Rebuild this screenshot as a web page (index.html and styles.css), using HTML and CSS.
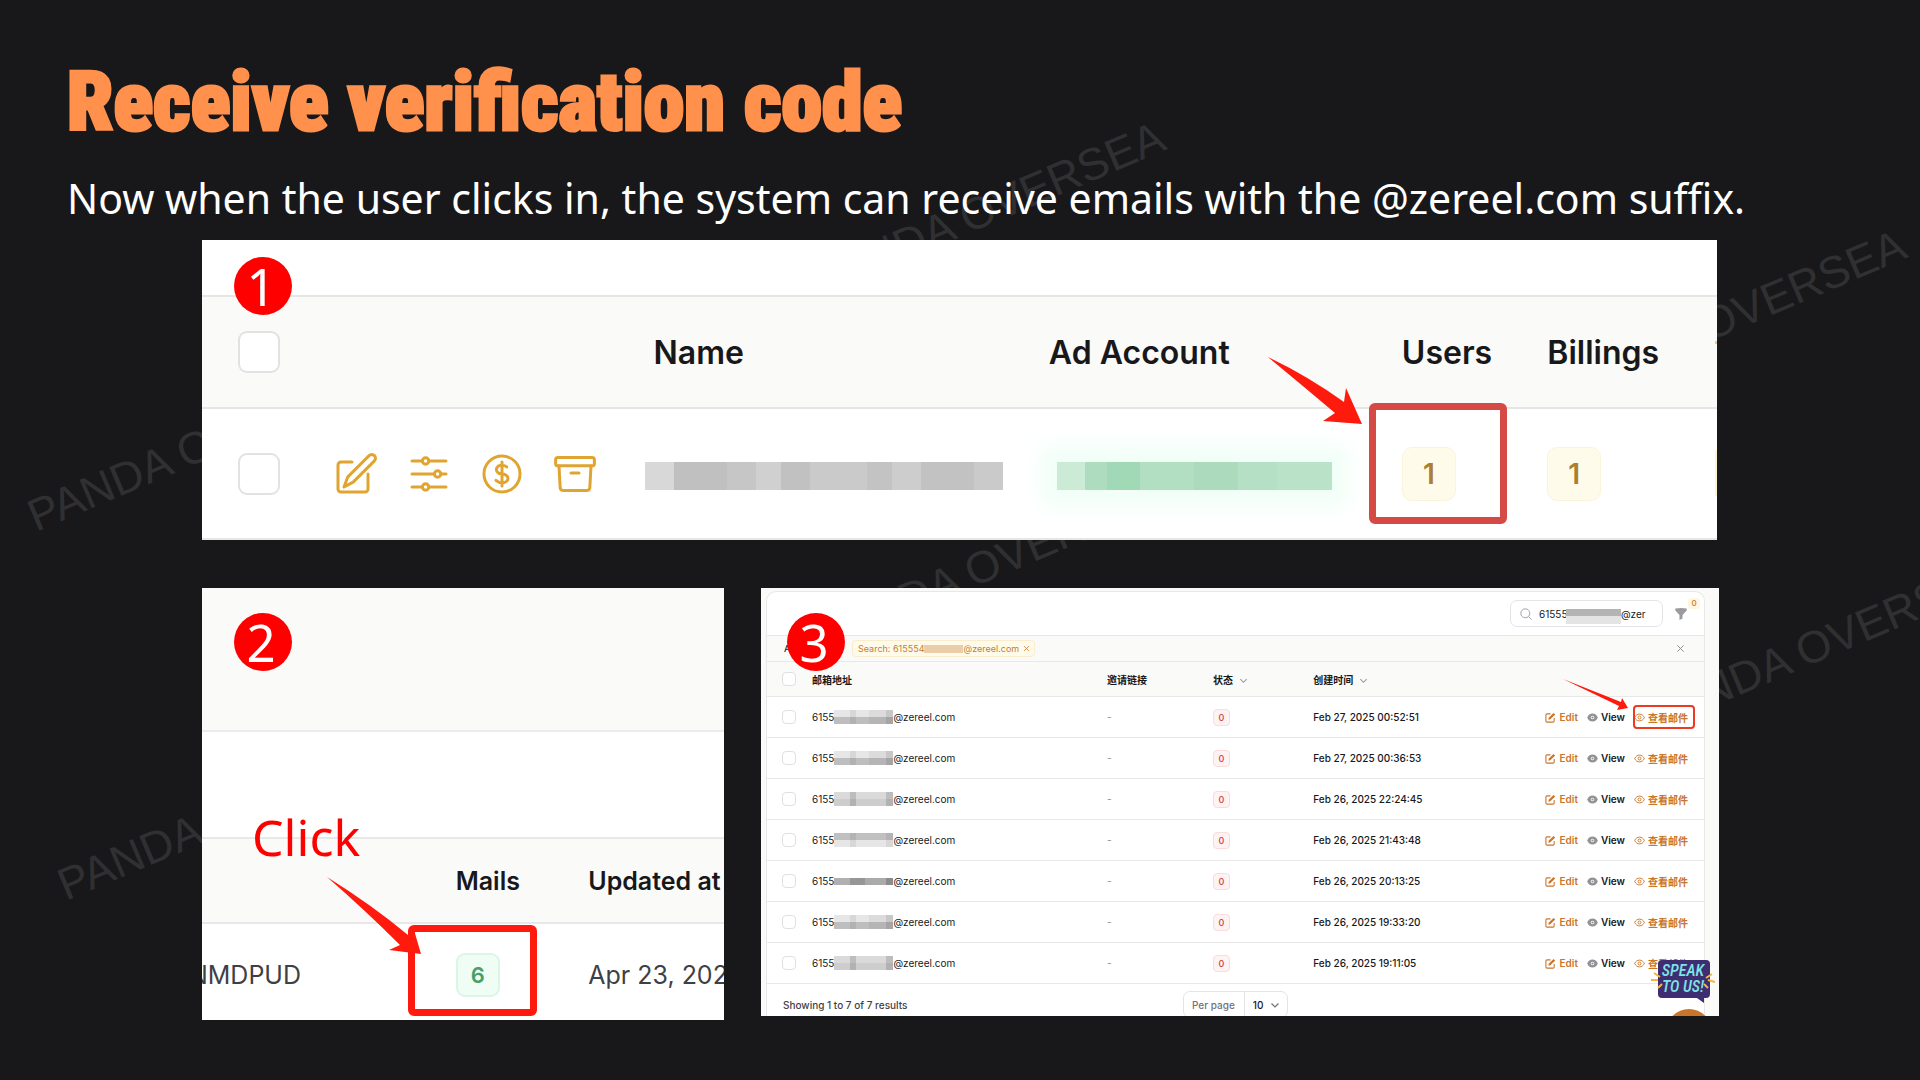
FILE: index.html
```html
<!DOCTYPE html>
<html lang="en">
<head>
<meta charset="utf-8">
<title>Receive verification code</title>
<link rel="stylesheet" href="styles.css">
</head>
<body>
<svg class="defs" aria-hidden="true">
  <symbol id="pencil" viewBox="0 0 24 24"><path d="M16.862 4.487l1.687-1.688a1.875 1.875 0 1 1 2.652 2.652L10.582 16.070 6 18.500l1.930-5.082 8.932-8.931ZM18 12v7.500A1.500 1.500 0 0 1 16.500 21H4.500A1.500 1.500 0 0 1 3 19.500V7.500A1.500 1.500 0 0 1 4.500 6H10"/></symbol>
  <symbol id="sliders" viewBox="0 0 24 24"><path d="M3.500 5.500h5m3.600 0h8.400M3.500 12h11m3.600 0h2.400M3.500 18.500h5m3.600 0h8.400"/><circle cx="10.300" cy="5.500" r="1.600"/><circle cx="16.300" cy="12" r="1.600"/><circle cx="10.300" cy="18.500" r="1.600"/></symbol>
  <symbol id="dollar" viewBox="0 0 24 24"><circle cx="12" cy="12" r="9"/><path d="M12 6v12m-3-2.800.9.6c1.100.9 3 .9 4.200 0s1.200-2.300 0-3.200c-.6-.4-1.300-.6-2.100-.6-.7 0-1.500-.2-2-.7-1.100-.8-1.100-2.200 0-3.100s2.900-.8 4 0l.4.3"/></symbol>
  <symbol id="archive" viewBox="0 0 24 24"><rect x="2.300" y="3.700" width="19.400" height="4.200" rx="1.200"/><path d="m4 8 .6 11a1.600 1.600 0 0 0 1.600 1.300h11.600a1.600 1.600 0 0 0 1.600-1.300L20 8m-10 3.500h4"/></symbol>
  <symbol id="edit" viewBox="0 0 12 12"><path d="M6 2H2.200A1.200 1.200 0 0 0 1 3.200v6.600A1.200 1.200 0 0 0 2.200 11h6.600A1.200 1.200 0 0 0 10 9.800V6.500" fill="none" stroke="currentColor" stroke-width="1.200"/><path d="m4 6.300 5.300-5.300 1.800 1.800L5.800 8 3.700 8.500z" fill="currentColor"/></symbol>
  <symbol id="eye-solid" viewBox="0 0 12 12"><path fill="currentColor" fill-rule="evenodd" d="M.2 6C1.300 3.200 3.300 1.600 6 1.600S10.700 3.200 11.800 6C10.700 8.800 8.700 10.400 6 10.400S1.300 8.800.2 6zM6 4a2 2 0 1 0 0 4 2 2 0 0 0 0-4z"/><circle cx="6" cy="6" r="1.200" fill="currentColor"/></symbol>
  <symbol id="eye" viewBox="0 0 12 12"><path fill="none" stroke="currentColor" d="M.7 6C1.800 3.700 3.700 2.300 6 2.300S10.200 3.700 11.300 6C10.200 8.300 8.300 9.700 6 9.700S1.800 8.300.7 6z"/><circle cx="6" cy="6" r="1.600" fill="none" stroke="currentColor"/></symbol>
  <symbol id="chevron" viewBox="0 0 10 10"><path d="m1.500 3.500 3.500 3.500 3.500-3.500" fill="none" stroke="currentColor" stroke-width="1.200"/></symbol>
  <symbol id="cross" viewBox="0 0 10 10"><path d="m1.500 1.500 7 7m0-7-7 7" fill="none" stroke="currentColor" stroke-width="1.100"/></symbol>
</svg>

<div class="watermarks" aria-hidden="true">
  <span class="mark m1">PANDA OVERSEA</span>
  <span class="mark m2">PANDA OVERSEA</span>
  <span class="mark m3">PANDA OVERSEA</span>
  <span class="mark m4">PANDA OVERSEA</span>
  <span class="mark m5">PANDA OVERSEA</span>
  <span class="mark m6">PANDA OVERSEA</span>
</div>

<main class="slide">
  <header class="intro">
    <h1>Receive verification code</h1>
    <p>Now when the user clicks in, the system can receive emails with the @zereel.com suffix.</p>
  </header>

  <div class="steps">
    <section class="shot accounts">
      <span class="step">1</span>
      <div class="strip"></div>
      <table>
        <colgroup><col class="a1"><col class="a2"><col class="a3"><col class="a4"><col class="a5"><col class="a6"></colgroup>
        <thead><tr>
          <th class="check"><input type="checkbox" aria-label="Select all accounts"></th><th></th><th>Name</th><th>Ad Account</th><th>Users</th><th>Billings</th>
        </tr></thead>
        <tbody><tr>
          <td class="check"><input type="checkbox" aria-label="Select account"></td>
          <td><div class="tools">
            <button aria-label="Edit"><svg><use href="#pencil"/></svg></button>
            <button aria-label="Settings"><svg><use href="#sliders"/></svg></button>
            <button aria-label="Billing"><svg><use href="#dollar"/></svg></button>
            <button aria-label="Archive"><svg><use href="#archive"/></svg></button>
          </div></td>
          <td><div class="mosaic grey"></div></td>
          <td><div class="mosaic green"></div></td>
          <td><span class="count">1</span></td>
          <td><span class="count">1</span></td>
        </tr></tbody>
      </table>
      <div class="frame frame-users"></div>
      <svg class="arrow arrow-users" viewBox="0 0 94 67"><path d="M0 0Q40 19 76 45L78 31 94 67 55 64 67 56Q34 28 0 0z"/></svg>
      <i class="edge edge-head"></i><i class="edge edge-row"></i>
    </section>

    <section class="shot mails">
      <span class="step">2</span>
      <div class="strip tinted"></div>
      <div class="strip plain"></div>
      <table>
        <colgroup><col class="b1"><col class="b2"><col class="b3"></colgroup>
        <thead><tr><th></th><th>Mails</th><th>Updated at</th></tr></thead>
        <tbody><tr><td><div class="code">NMDPUD</div></td><td><span class="count">6</span></td><td>Apr 23, 2025</td></tr></tbody>
      </table>
      <span class="click">Click</span>
      <div class="frame frame-mails"></div>
      <svg class="arrow arrow-mails" viewBox="0 0 94 77"><path d="M0 0Q45 28 81 58L87 53 94 77 62 73 73 68Q38 33 0 0z"/></svg>
    </section>

    <section class="shot inbox">
      <div class="card">
        <div class="toolbar">
          <label class="search"><svg viewBox="0 0 12 12"><circle cx="5.300" cy="5.300" r="4.500"/><path d="m8.600 8.600 3 3"/></svg>
            <input type="text" aria-label="Search" value="61555&nbsp;&nbsp;&nbsp;&nbsp;&nbsp;&nbsp;&nbsp;&nbsp;&nbsp;&nbsp;&nbsp;&nbsp;&nbsp;&nbsp;&nbsp;&nbsp;&nbsp;&nbsp;&nbsp;@zer"><i class="blur"></i></label>
          <button class="filter" aria-label="Filter"><svg viewBox="0 0 12 12"><path d="M.3.500Q6-.5 11.700.500V2.600L7.500 7v3.600L4.500 12V7L.3 2.600z"/></svg><span>0</span></button>
        </div>
        <div class="filters">
          <span class="label">Active filters</span>
          <span class="chip">Search: 615554<i></i>@zereel.com<button aria-label="Remove filter"><svg><use href="#cross"/></svg></button></span>
          <button class="clear" aria-label="Clear filters"><svg><use href="#cross"/></svg></button>
        </div>
        <table>
          <colgroup><col class="c1"><col class="c2"><col class="c3"><col class="c4"><col class="c5"><col class="c6"></colgroup>
          <thead><tr>
            <th class="check"><input type="checkbox" aria-label="Select all"></th><th>邮箱地址</th><th>邀请链接</th><th>状态<svg class="sort"><use href="#chevron"/></svg></th><th>创建时间<svg class="sort"><use href="#chevron"/></svg></th><th></th>
          </tr></thead>
          <tbody id="rows"></tbody>
        </table>
        <div class="footer">
          <span>Showing 1 to 7 of 7 results</span>
          <div class="pager"><label for="per">Per page</label><select id="per"><option>10</option></select><svg><use href="#chevron"/></svg></div>
        </div>
      </div>
      <span class="step">3</span>
      <div class="frame frame-view"></div>
      <svg class="arrow arrow-view" viewBox="0 0 66 32"><path d="M0 0 58 23 59 19 65 29 54 31 56 27z"/></svg>
      <i class="bubble"></i>
      <a class="speak" href="#contact">
        <svg viewBox="0 0 64 46"><path class="body" d="M11 1H55q4 0 4 4V35q0 4-4 4H53V44L46 39H11q-4 0-4-4V5q0-4 4-4z"/><path class="ray" d="M3 14 9 18M0 21H7M7 29 11 25M55 19 61 15M57 21 64 23M53 25 57 29"/></svg>
        <span>SPEAK<br>TO US!</span>
      </a>
    </section>
  </div>
</main>
<script src="rows.js"></script>
</body>
</html>
```
FILE: rows.js
```js
const rows = [
  ["Feb 27, 2025 00:52:51", "light"],
  ["Feb 27, 2025 00:36:53", "light"],
  ["Feb 26, 2025 22:24:45", "even"],
  ["Feb 26, 2025 21:43:48", "heavy"],
  ["Feb 26, 2025 20:13:25", "band"],
  ["Feb 26, 2025 19:33:20", "light"],
  ["Feb 26, 2025 19:11:05", "even"]
];
document.getElementById("rows").innerHTML = rows.map(([date, tone]) => `
<tr>
  <td class="check"><input type="checkbox" aria-label="Select row"></td>
  <td><div class="mail">6155<i class="${tone}"></i>@zereel.com</div></td>
  <td class="none">-</td>
  <td><span class="count">0</span></td>
  <td>${date}</td>
  <td><div class="actions">
    <a class="amber" href="#edit"><svg class="small"><use href="#edit"/></svg>Edit</a>
    <a class="view" href="#view"><svg><use href="#eye-solid"/></svg>View</a>
    <a class="amber" href="#mail"><svg><use href="#eye"/></svg>查看邮件</a>
  </div></td>
</tr>`).join("");
```
FILE: styles.css
```css
* { box-sizing: border-box; }
body { margin: 0; background: #18181a; color: #fff; font-family: "Noto Sans", "Noto Sans CJK SC", sans-serif; }
.defs { display: none; }
button { border: 0; padding: 0; background: none; color: inherit; font: inherit; display: flex; }
a { color: inherit; text-decoration: none; }
table { width: 100%; table-layout: fixed; border-spacing: 0; text-align: left; }
th, td { padding: 0; white-space: nowrap; vertical-align: middle; }
input[type="checkbox"] { appearance: none; display: block; margin: 0; background: #fff; }

/* watermark layer */
.watermarks { position: absolute; inset: 0; overflow: hidden; }
.mark { position: absolute; font: 45px/44px "Liberation Sans", sans-serif; color: #303032; white-space: nowrap; transform: rotate(-23deg); transform-origin: 0 37px; }
.m1 { left: 36px; top: 495px; }
.m2 { left: 819px; top: 260px; }
.m3 { left: 1560px; top: 368px; }
.m4 { left: 824px; top: 614px; }
.m5 { left: 66px; top: 864px; }
.m6 { left: 1655px; top: 694px; }

.slide { position: relative; min-height: 100vh; padding: 55px 0 60px; }
.intro { padding: 0 67px; }
h1 { margin: 0 0 21px; font: 900 82px/94px "Roboto Condensed", sans-serif; color: #ff914d; -webkit-text-stroke: 3px #ff914d; }
.intro p { margin: 0 0 14px; font-size: 41px; line-height: 56px; }
.steps { display: grid; grid-template-columns: 522fr 958fr; gap: 48px 37px; align-items: start; padding: 0 201px 0 202px; }
.shot { position: relative; overflow: hidden; background: #fff; color: #18181b; font-family: Inter, "Noto Sans CJK SC", sans-serif; }
.step { position: absolute; z-index: 2; left: 32px; top: 25px; width: 58px; height: 58px; border-radius: 50%; background: #f00; color: #fff; font: 51px/58px "Noto Sans", sans-serif; text-align: center; padding-right: 4px; }
.count { display: flex; align-items: center; justify-content: center; border: 1px solid; }
.frame { position: absolute; border: 7px solid #ff1a0e; border-radius: 6px; }
.arrow { position: absolute; fill: #ff1a0e; }

/* step 1 */
.accounts { grid-column: 1 / -1; margin-right: 2px; }
.accounts .step { top: 17px; }
.accounts .strip { height: 55px; }
.accounts th { height: 114px; background: #fafaf9; border: solid #e6e6e6; border-width: 2px 0; font-size: 32px; font-weight: 600; }
.accounts td { height: 131px; border-bottom: 2px solid #e6e6e6; }
.a1 { width: 8.6%; } .a2 { width: 21.2%; } .a3 { width: 26.1%; } .a4 { width: 23.3%; } .a5 { width: 9.6%; } .a6 { width: 11.2%; }
.accounts .check { padding-left: 36px; }
.accounts input { width: 42px; height: 42px; border: 2px solid #e2e2e2; border-radius: 9px; }
.tools { display: flex; gap: 25px; color: #e0a530; }
.tools svg { width: 48px; height: 48px; fill: none; stroke: currentColor; stroke-width: 1.5; stroke-linecap: round; stroke-linejoin: round; }
.mosaic { height: 28px; margin-top: 4px; }
.grey { width: 358px; margin-left: -8px; background: linear-gradient(90deg, #d8d8d8 8%, #c0c0c0 8% 23%, #c6c6c6 23% 31%, #d0d0d0 31% 38%, #c1c1c1 38% 46%, #cacaca 46% 62%, #c3c3c3 62% 69%, #cdcdcd 69% 77%, #c2c2c2 77% 92%, #cacaca 92%); }
.green { width: 275px; margin-left: 8px; background: linear-gradient(90deg, #ccebd7 10%, #aedcbe 10% 18%, #a1d8b5 18% 30%, #b2dec2 30% 50%, #abdabd 50% 66%, #b6e0c6 66% 80%, #b9e2c8 80%); box-shadow: 0 0 22px 16px #f0fff7; }
.accounts .count { width: 54px; height: 54px; border-color: #fbf3dc; border-radius: 10px; background: #fffbea; color: #aa8030; font-size: 28px; font-weight: 600; }
.frame-users { left: 1167px; top: 163px; width: 138px; height: 121px; border-color: #d64a46; }
.arrow-users { left: 1066px; top: 117px; width: 94px; }
.edge { position: absolute; right: 0; width: 2px; background: #f6c77e; }
.edge-head { top: 101px; height: 3px; }
.edge-row { top: 210px; height: 46px; background: #fdf3d3; }

/* step 2 */
.tinted { height: 142px; background: #fafaf9; }
.plain { height: 107px; border-top: 2px solid #ececec; }
.mails th { height: 87px; border: solid #e8e8e8; border-width: 2px 0; background: #fafaf9; font-size: 25px; font-weight: 600; }
.mails td { height: 96px; font-size: 25px; color: #3f3f46; padding-top: 6px; }
.b1 { width: 48.6%; } .b2 { width: 25.4%; } .b3 { width: 26%; }
.code { width: 99px; display: flex; justify-content: flex-end; }
.mails .count { width: 44px; height: 44px; border: 2px solid #dcf5e5; border-radius: 9px; background: #f0fdf4; color: #46a06c; font-size: 22px; font-weight: 600; }
.click { position: absolute; left: 50px; top: 214px; color: #f00; font: 50px/70px "Noto Sans", sans-serif; }
.frame-mails { left: 206px; top: 337px; width: 129px; height: 91px; }
.arrow-mails { left: 125px; top: 289px; width: 94px; }

/* step 3 */
.inbox { background: #fafaf9; padding: 3px 14px 0 5px; font-size: 10px; font-weight: 500; }
.inbox .step { left: 26px; }
.card { border: solid #e8e8e8; border-width: 1px 1px 0; border-radius: 10px 10px 0 0; background: #fff; }
.toolbar { display: flex; justify-content: flex-end; align-items: center; gap: 12px; height: 43px; padding-right: 17px; }
.search { position: relative; display: flex; align-items: center; gap: 7px; width: 153px; height: 27px; padding: 0 14px 0 9px; border: 1px solid #e4e4e7; border-radius: 7px; }
.search svg { flex: none; width: 12px; height: 12px; fill: none; stroke: #a1a1aa; }
.search input { width: 110px; border: 0; padding: 0; background: none; font: 400 10px/16px Inter, sans-serif; color: #18181b; outline: 0; }
.blur { position: absolute; left: 55px; top: 8px; width: 55px; height: 15px; background: linear-gradient(#b4b4b4 50%, #e4e4e4 50%); }
.filter { position: relative; color: #c77b30; }
.filter svg { width: 12px; height: 12px; fill: #9a9a9f; }
.filter span { position: absolute; left: 13px; top: -10px; width: 12px; height: 11px; border-radius: 3px; background: #fff6e0; font-size: 8px; line-height: 11px; text-align: center; }
.filters { display: flex; align-items: center; gap: 9px; height: 26px; padding: 0 19px 0 17px; border-top: 1px solid #e8e8e8; background: #fafaf9; font-size: 9px; }
.label { width: 59px; white-space: nowrap; }
.chip { display: flex; align-items: center; height: 17px; padding: 0 4px 0 5px; border: 1px solid #fbeccb; border-radius: 4px; background: #fffbeb; color: #c77b30; font-weight: 400; white-space: nowrap; }
.chip i { width: 39px; height: 8px; background: #ebcda9; }
.chip button { margin-left: 4px; }
.chip svg { width: 7px; height: 7px; }
.clear { margin-left: auto; color: #8f8f95; }
.clear svg { width: 9px; height: 9px; }
.c1 { width: 4.8%; } .c2 { width: 31.5%; } .c3 { width: 11.3%; } .c4 { width: 10.7%; } .c5 { width: 17%; } .c6 { width: 24.7%; }
.inbox th { height: 36px; border: solid #e8e8e8; border-width: 1px 0; background: #fafaf9; font-weight: 700; }
.inbox td { height: 41px; border-bottom: 1px solid #e8e8e8; }
.inbox .check { padding-left: 15px; }
.inbox .check input { width: 14px; height: 14px; border: 1px solid #e0e0e2; border-radius: 4px; }
.sort { width: 9px; height: 9px; margin-left: 6px; color: #9a9a9f; vertical-align: -1px; }
.mail { display: flex; align-items: center; font-weight: 400; }
.mail i { width: 59px; height: 14px; }
.light { background: linear-gradient(90deg, #fff0 27%, #0001 27% 38%, #fff0 38% 60%, #0000000c 60% 88%, #0002 88%), linear-gradient(#e6e6e6 50%, #bebebe 50%); }
.even { background: linear-gradient(90deg, #fff0 27%, #0002 27% 38%, #fff0 38% 88%, #0002 88%), linear-gradient(#dadada 50%, #cdcdcd 50%); }
.heavy { background: linear-gradient(90deg, #fff0 27%, #0001 27% 38%, #fff0 38% 88%, #0001 88%), linear-gradient(#c0c0c0 50%, #e6e6e6 50%); }
.mail .band { height: 7px; background: linear-gradient(90deg, #b0b0b0 27%, #969696 27% 52%, #aaa 52% 88%, #8c8c8c 88%); }
.none { color: #9a9a9f; }
.inbox .count { width: 17px; height: 17px; border-color: #fbdcdc; border-radius: 4px; background: #fef2f2; color: #d04040; font-size: 9px; }
.actions { display: flex; justify-content: flex-end; gap: 9px; padding-right: 16px; font-weight: 600; }
.actions a { display: flex; align-items: center; gap: 3px; }
.actions svg { width: 11px; height: 11px; }
.amber { color: #c9752a; }
.view svg { color: #929296; }
.footer { display: grid; grid-template-columns: 1fr auto 1fr; padding: 7px 16px 0; height: 32px; overflow: hidden; color: #3f3f46; }
.footer > span { padding-top: 8px; }
.pager { display: flex; align-items: center; width: 105px; height: 27px; border: 1px solid #e4e4e7; border-radius: 7px; color: #71717a; }
.pager label { padding: 0 9px 0 8px; }
.pager select { appearance: none; width: 26px; height: 27px; border: 0; border-left: 1px solid #e4e4e7; padding: 0 0 0 8px; background: none; font: 500 10px Inter, sans-serif; color: #18181b; }
.pager svg { width: 10px; height: 10px; }
.frame-view { left: 872px; top: 117px; width: 62px; height: 24px; border-width: 2px; border-radius: 4px; border-color: #f03a20; }
.arrow-view { left: 802px; top: 91px; width: 66px; }
.bubble { position: absolute; right: 7px; bottom: -39px; width: 46px; height: 46px; border-radius: 50%; background: #c9752a; }
.speak { position: absolute; right: 4px; bottom: 11px; width: 64px; height: 46px; }
.speak svg { position: absolute; inset: 0; }
.body { fill: #3e2d70; }
.ray { stroke: #f4b73c; stroke-width: 2; fill: none; }
.speak span { position: relative; display: block; padding-top: 4px; color: #7de3e6; font: italic 500 16px/16px "Roboto Condensed", sans-serif; text-align: center; }
```
